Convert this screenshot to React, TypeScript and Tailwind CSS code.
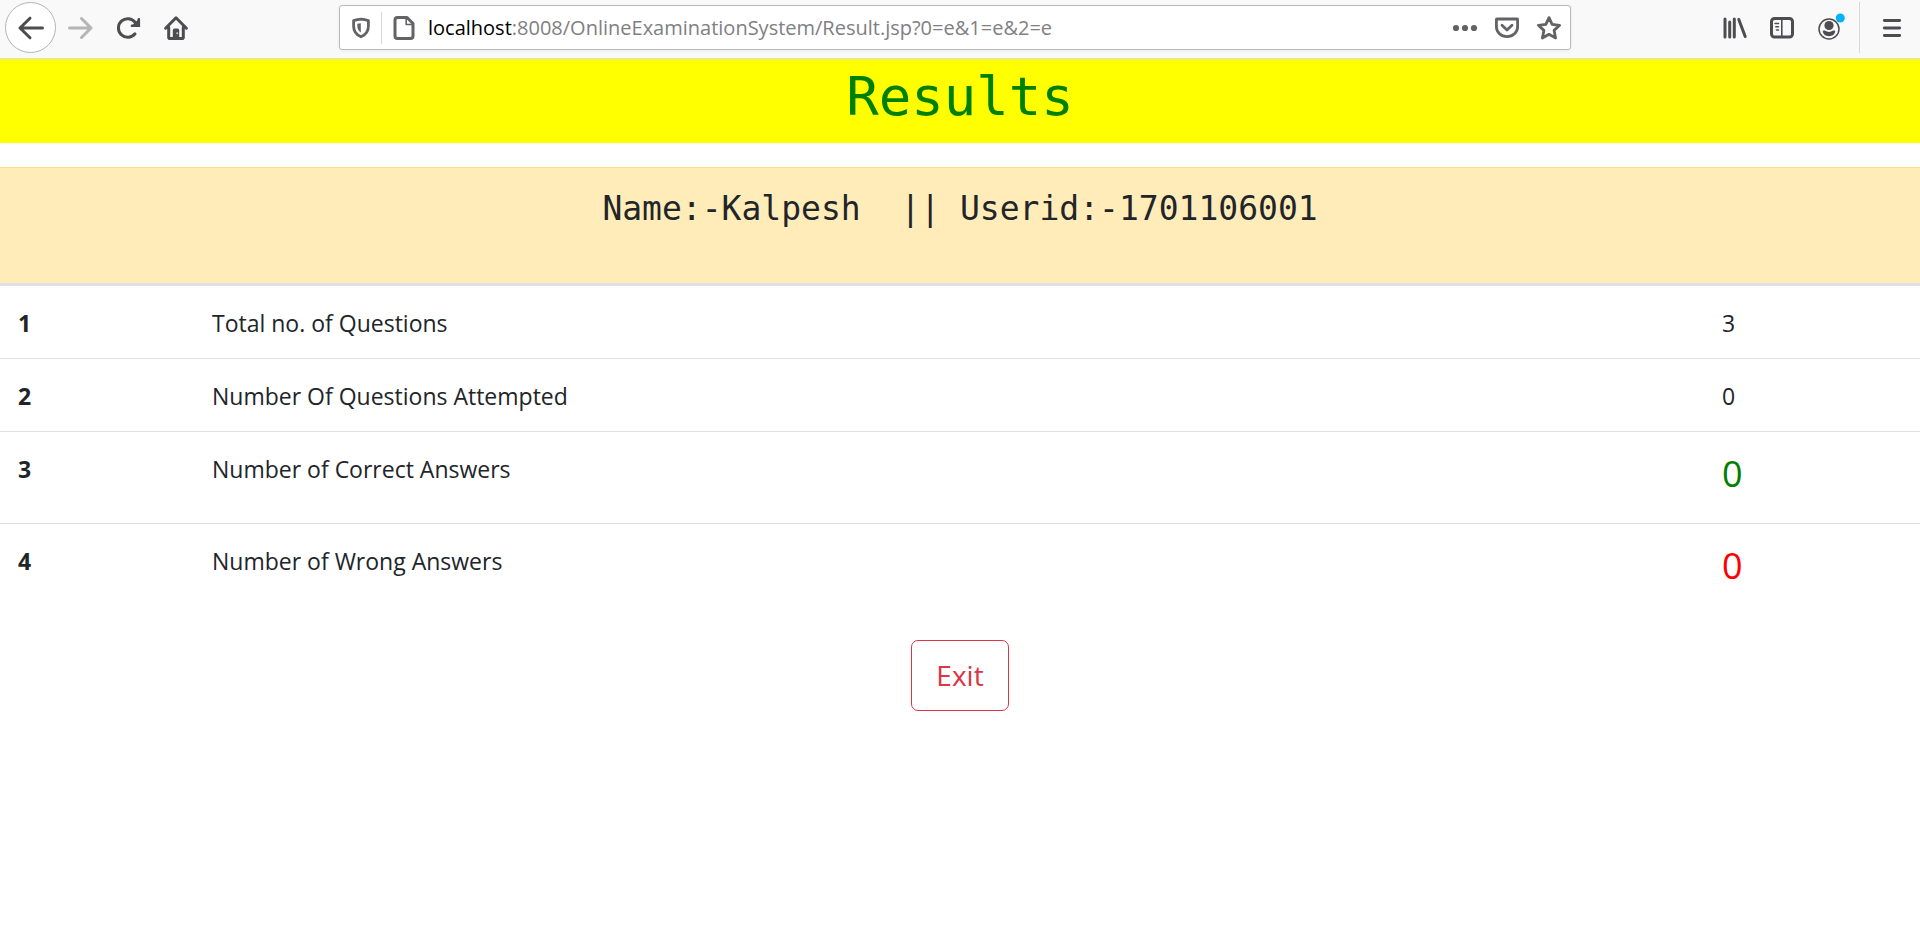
import type { ReactNode } from "react";

const results = [
  { id: 1, label: "Total no. of Questions", value: 3, style: "pb-[17px] leading-9" },
  { id: 2, label: "Number Of Questions Attempted", value: 0, style: "pb-[17px] leading-9" },
  { id: 3, label: "Number of Correct Answers", value: 0, style: "pb-[27px] text-[36px] leading-[45px] text-[#008000]" },
  { id: 4, label: "Number of Wrong Answers", value: 0, style: "pb-[27px] text-[36px] leading-[45px] text-[#ff0000]" },
];

function IconButton({ label, className = "w-12", children }: { label: string; className?: string; children: ReactNode }) {
  return (
    <button type="button" aria-label={label} className={`flex h-12 shrink-0 items-center justify-center ${className}`}>
      {children}
    </button>
  );
}

function Toolbar() {
  return (
    <header className="flex h-[59px] items-start border-b border-[#dcdce0] bg-[#f9f9fa] text-[#4d4d50]">
      <nav aria-label="Browser navigation" className="flex items-center pt-[2px] pl-[5px]">
        <IconButton label="Back" className="h-[51px] w-[51px] rounded-full border border-[#b4b4b4] bg-white">
          <svg width="28" height="28" viewBox="0 0 28 28" fill="none" stroke="currentColor" strokeWidth="3" strokeLinecap="round" strokeLinejoin="round">
            <path d="M25.500 14H3M13 4.200 3 14l10 9.800" />
          </svg>
        </IconButton>
        <IconButton label="Forward">
          <svg width="28" height="28" viewBox="0 0 28 28" fill="none" stroke="#b5b5b6" strokeWidth="3" strokeLinecap="round" strokeLinejoin="round">
            <path d="M3.500 14H25M15.500 4.500 25 14l-9.500 9.500" />
          </svg>
        </IconButton>
        <IconButton label="Reload">
          <svg width="28" height="28" viewBox="0 0 28 28" fill="none" stroke="currentColor" strokeWidth="3" strokeLinecap="round">
            <path d="M21 19.800A9.300 9.300 0 1 1 21.300 8.600" />
            <path d="M25.600 4v9h-9z" fill="currentColor" stroke="none" />
            <path d="M24.800 5.400v6.300H18" strokeWidth="2.600" />
          </svg>
        </IconButton>
        <IconButton label="Home">
          <svg width="28" height="28" viewBox="0 0 28 28" fill="none" stroke="currentColor" strokeWidth="3" strokeLinecap="round" strokeLinejoin="round">
            <path d="M3.600 14.200 14 3.800l10.400 10.400M6.700 13v10.300q0 1.300 1.300 1.300h12q1.300 0 1.300-1.300V13" />
            <path d="M10.800 25v-8.800q0-1.700 1.700-1.700h3q1.700 0 1.700 1.700V25z" fill="currentColor" stroke="none" />
            <circle cx="15.200" cy="19.200" r="1" fill="#c8c8c8" stroke="none" />
          </svg>
        </IconButton>
      </nav>

      <div className="mt-[5px] mr-[140px] ml-[139px] flex h-[45px] min-w-0 flex-1 items-center rounded-[3px] border border-[#b9b9ba] bg-white text-[#636366] shadow-[0_1px_4px_rgba(0,0,0,0.06)]">
        <IconButton label="Tracking protection" className="ml-px w-10">
          <svg width="20" height="22" viewBox="0 0 20 22" fill="none" stroke="currentColor" strokeWidth="2.800" strokeLinejoin="round">
            <path d="M10 2.200c2.500.1 5 .6 7.400 1.400v5.600c0 5-3 8.600-7.400 10.600-4.400-2-7.400-5.600-7.400-10.600V3.600C5 2.800 7.500 2.300 10 2.200z" />
            <path d="M9.800 6.200v9.400C7.600 14 6.300 12 6.300 9V6.800z" fill="currentColor" stroke="none" />
          </svg>
        </IconButton>
        <span className="h-8 w-px bg-[#d7d7db]" />
        <IconButton label="Site information" className="w-11">
          <svg width="24" height="26" viewBox="0 0 24 26" fill="none" stroke="currentColor" strokeWidth="3" strokeLinejoin="round">
            <path d="M15 2.500H5.500q-2.500 0-2.500 2.500v16q0 2.500 2.500 2.500h13q2.500 0 2.500-2.500V8.500z" />
            <path d="M14.200 3.500v6h6.500" strokeWidth="1.600" />
          </svg>
        </IconButton>
        <label htmlFor="address" className="pl-[2px] text-xl text-black">localhost</label>
        <input
          id="address"
          type="text"
          defaultValue=":8008/OnlineExaminationSystem/Result.jsp?0=e&1=e&2=e"
          className="h-10 min-w-0 flex-1 bg-transparent text-xl text-[#808083] outline-none"
        />
        <IconButton label="Page actions" className="w-[42px]">
          <svg width="26" height="8" viewBox="0 0 26 8" fill="currentColor">
            <circle cx="4" cy="4" r="3.100" />
            <circle cx="13" cy="4" r="3.100" />
            <circle cx="22" cy="4" r="3.100" />
          </svg>
        </IconButton>
        <IconButton label="Save to Pocket" className="w-[42px]">
          <svg width="26" height="22" viewBox="0 0 26 22" fill="none" stroke="currentColor" strokeWidth="2.800" strokeLinecap="round" strokeLinejoin="round">
            <path d="M2.900 2h20.200q.5 0 .5.500V9.800c0 5.600-4.700 9.800-10.600 9.800S2.400 15.400 2.400 9.800V2.500q0-.5.500-.5z" />
            <path d="m8 8.300 5 4.700 5-4.700" />
          </svg>
        </IconButton>
        <IconButton label="Bookmark this page" className="w-[42px]">
          <svg width="28" height="28" viewBox="0 0 28 28" fill="none" stroke="currentColor" strokeWidth="2.800" strokeLinejoin="round">
            <path d="m14 3.600 3.100 6.800 7.500.9-5.500 5.100 1.500 7.600L14 20.300 7.400 24l1.500-7.600-5.500-5.100 7.500-.9z" />
          </svg>
        </IconButton>
      </div>

      <div className="flex items-center pt-[2px]">
        <IconButton label="Library">
          <svg width="26" height="24" viewBox="0 0 26 24" fill="none" stroke="currentColor" strokeWidth="3" strokeLinecap="round">
            <path d="M3 3v18M7.700 6v15M12.300 3v18M16.800 3.500l6.400 17" />
          </svg>
        </IconButton>
        <IconButton label="Sidebars" className="w-[46px]">
          <svg width="26" height="24" viewBox="0 0 26 24" fill="none" stroke="currentColor" strokeWidth="3" strokeLinecap="round">
            <rect x="2.500" y="2.500" width="21" height="18.500" rx="3" />
            <path d="M12.800 3v18" strokeWidth="1.600" />
            <path d="M6 7.500h3.500M6.800 10.700h2.700M7.500 13.900h2" strokeWidth="1.500" />
          </svg>
        </IconButton>
        <IconButton label="Account" className="w-[52px]">
          <svg width="28" height="34" viewBox="0 0 28 34" fill="currentColor">
            <circle cx="12" cy="18" r="10" fill="none" stroke="currentColor" strokeWidth="1.500" />
            <circle cx="12" cy="14.500" r="4.600" />
            <path d="M5.800 20.300q0-.7.800-.7h1.200q4.200 2.600 8.400 0h1.200q.8 0 .8.700c-.3 3.200-3.100 4.900-6.200 4.900s-5.900-1.700-6.200-4.900z" />
            <circle cx="23.300" cy="7" r="4.500" fill="#00b3f4" />
          </svg>
        </IconButton>
        <span className="ml-[2px] h-[51px] w-px bg-[#d9d9dc]" />
        <IconButton label="Open menu" className="ml-1 w-14">
          <svg width="20" height="20" viewBox="0 0 20 20" fill="none" stroke="currentColor" strokeWidth="2.800" strokeLinecap="round">
            <path d="M2.300 2.500h15.400M2.300 10h15.400M2.300 17.500h15.400" />
          </svg>
        </IconButton>
      </div>
    </header>
  );
}

export default function App() {
  return (
    <div className="min-h-screen bg-white font-['Open_Sans','Noto_Sans',sans-serif] text-[#212529]">
      <Toolbar />
      <main>
        <h1 className="mb-6 bg-[#ffff00] pt-[2px] pb-[10px] text-center font-['DejaVu_Sans_Mono',monospace] text-[54px] leading-[72px] text-[#008000]">
          Results
        </h1>
        <table className="w-full table-fixed border-separate border-spacing-0 text-left text-[23px]">
          <colgroup>
            <col className="w-[194px]" />
            <col />
            <col className="w-[216px]" />
          </colgroup>
          <thead>
            <tr>
              <th
                colSpan={3}
                className="h-[119px] border-t border-b-3 border-t-[#ffdf7e] border-b-[#dee2e6] bg-[#ffecb9] pt-[18px] text-center align-top font-['DejaVu_Sans_Mono',monospace] text-[33px] leading-[46px] font-normal whitespace-pre"
              >
                {"Name:-Kalpesh  || Userid:-1701106001"}
              </th>
            </tr>
          </thead>
          <tbody>
            {results.map((row, index) => {
              const line = index > 0 ? "border-t border-[#dee2e6]" : "";
              return (
                <tr key={row.id} className="align-top">
                  <th scope="row" className={`px-[18px] pt-[19px] pb-[17px] leading-9 font-bold ${line}`}>{row.id}</th>
                  <td className={`px-[18px] pt-[19px] pb-[17px] leading-9 ${line}`}>{row.label}</td>
                  <td className={`px-[18px] pt-[19px] ${line} ${row.style}`}>{row.value}</td>
                </tr>
              );
            })}
          </tbody>
        </table>
        <div className="mt-[25px] flex justify-center">
          <button type="button" className="rounded-[7px] border border-[#dc3545] px-6 py-3 text-[28px] leading-[45px] text-[#dc3545]">
            Exit
          </button>
        </div>
      </main>
    </div>
  );
}
